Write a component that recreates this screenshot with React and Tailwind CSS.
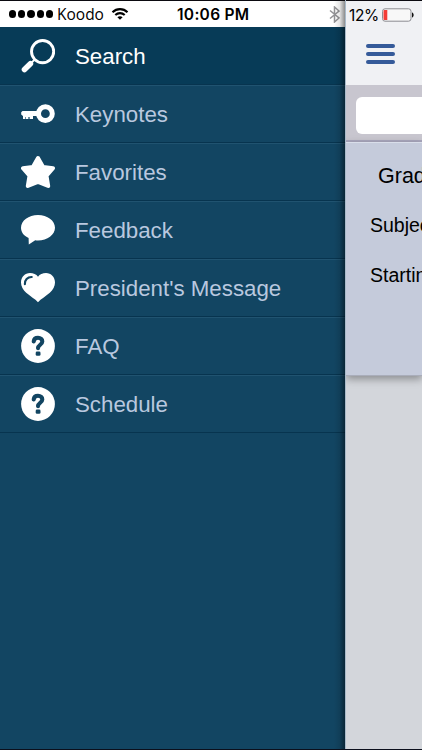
import React, { useState } from 'react';

const SearchIcon = () => (
  <svg className="w-[34px] h-[34px]" viewBox="0 0 34 34" fill="none" stroke="#fff">
    <circle cx="21.6" cy="12.6" r="11.1" strokeWidth="2.9" />
    <path d="M13.6 20.6l-3 3" strokeWidth="2" />
    <path d="M9.4 24.8L3.5 30.5" strokeWidth="5.6" strokeLinecap="round" />
  </svg>
);

const KeyIcon = () => (
  <svg className="w-[34px] h-[34px]" viewBox="0 0 34 34" fill="#fff">
    <circle cx="24.4" cy="16.7" r="6.9" fill="none" stroke="#fff" strokeWidth="5" />
    <path d="M1.5 14H17v5h-5v3H8.6v-2H7.4v2H5v-2H4.400v2H2v-3L.2 17.5v-2.2z" />
  </svg>
);

const StarIcon = () => (
  <svg className="w-[34px] h-[34px]" viewBox="0 0 34 34" fill="#fff" stroke="#fff" strokeWidth="4" strokeLinejoin="round">
    <path d="M17 3l5.1 8.9L32 13.3l-6.5 7.5L27.2 31 17 26.9 6.8 31l1.7-10.2L2 13.3l9.900-1.400z" />
  </svg>
);

const BubbleIcon = () => (
  <svg className="w-[34px] h-[34px]" viewBox="0 0 34 34" fill="#fff">
    <path d="M17 2C7.6 2 0 7.7 0 14.7c0 4.3 2.7 8 7.6 10.3L7.8 31.4l6.4-4.200c1 .2 1.800.2 2.800.2 9.4 0 17-5.700 17-12.700S26.400 2 17 2z" />
  </svg>
);

const HeartIcon = () => (
  <svg className="w-[34px] h-[34px]" viewBox="0 0 34 34">
    <path
      d="M17 31.2C14 28 9.5 25.5 5.2 21.8 2 18.7 0 15.5 0 11.5 0 6 4 2 9 2c3.4 0 6.3 1.3 8 3.7C18.7 3.3 21.6 2 25 2c5 0 9 4 9 9.5 0 4-2 7.2-5.2 10.3C24.5 25.5 20 28 17 31.2z"
      fill="#fff"
    />
    <path d="M3.9 13.2c-.4-4.2 2.7-7.3 6.8-7.2" fill="none" stroke="#124562" strokeWidth="2.2" strokeLinecap="round" />
  </svg>
);

const QuestionIcon = () => (
  <svg className="w-[34px] h-[34px]" viewBox="0 0 34 34" fill="none">
    <circle cx="17" cy="17" r="16.9" fill="#fff" />
    <path
      d="M12.7 12.500c.3-2.400 1.900-3.700 4.300-3.700 2.600 0 4.300 1.500 4.300 3.700 0 3.200-4.200 3.300-4.300 6.600"
      stroke="#124562"
      strokeWidth="4.1"
      strokeLinecap="round"
    />
    <rect x="14.7" y="22.6" width="4.8" height="4.200" rx="1.300" fill="#124562" />
  </svg>
);

const menuItems = [
  { label: 'Search', icon: SearchIcon },
  { label: 'Keynotes', icon: KeyIcon },
  { label: 'Favorites', icon: StarIcon },
  { label: 'Feedback', icon: BubbleIcon },
  { label: "President's Message", icon: HeartIcon },
  { label: 'FAQ', icon: QuestionIcon },
  { label: 'Schedule', icon: QuestionIcon },
];

const StatusBar = () => (
  <div className="h-[27px] shrink-0 bg-white border-t border-[#0b0a10] flex items-center text-black font-['Inter']">
    <div className="flex gap-[2px] ml-[9px] w-[48px]">
      {[1, 2, 3, 4, 5].map((dot) => (
        <span key={dot} className="w-[7.2px] h-[7.2px] rounded-full bg-black" />
      ))}
    </div>
    <span className="mt-0.5 w-[54px] text-[15.5px] leading-none font-['Open_Sans'] whitespace-nowrap">Koodo</span>
    <svg className="w-[18px] h-[14px]" viewBox="0 0 18 14" fill="none" stroke="#000" strokeWidth="2.1">
      <path d="M1.5 5.3c4.2-4.2 10.8-4.2 15 0" />
      <path d="M4.3 8.1c2.7-2.6 6.7-2.6 9.4 0" />
      <path d="M9 12.8L6.4 10.2c1.5-1.4 3.7-1.4 5.2 0z" fill="#000" stroke="none" />
    </svg>
    <span className="ml-[48px] mt-0.5 w-[74px] text-[15.5px] leading-none font-semibold whitespace-nowrap tracking-[0.3px]">10:06 PM</span>
    <svg className="ml-[78px] w-[11px] h-[17px]" viewBox="0 0 11 17" fill="none" stroke="#929295" strokeWidth="1.5">
      <path d="M1 4.500l9 7.500-4.500 4V1L10 5l-9 7.500" />
    </svg>
  </div>
);

const Menu = ({ active, onSelect }) => (
  <nav className="flex flex-col">
    {menuItems.map((item) => {
      const Icon = item.icon;
      const isActive = item.label === active;
      return (
        <button
          key={item.label}
          onClick={() => onSelect(item.label)}
          className={`h-[58px] flex items-center pl-[21px] text-left border-t border-b border-b-[#07344f] ${
            isActive ? 'bg-[#073b57] border-t-[#073b57] text-white' : 'bg-[#124562] border-t-[#205370] text-[#b9c8df]'
          }`}
        >
          <Icon />
          <span className="ml-5 mt-0.5 text-[22.3px] leading-none whitespace-nowrap">{item.label}</span>
        </button>
      );
    })}
  </nav>
);

const Page = () => (
  <div className="flex-1 min-w-0 relative z-10 flex flex-col overflow-hidden bg-[#d3d6db] border-l border-[#a9bac9] text-black">
    <div className="h-[85px] shrink-0 bg-[#f0f1f4] border-t border-[#0b0a10]">
      <div className="h-[26px] mt-px flex items-center">
        <span className="ml-[3px] mt-0.5 w-[33px] text-[15.5px] leading-none whitespace-nowrap font-['Inter'] tracking-[-0.4px]">12%</span>
        <svg className="w-[33px] h-[14px]" viewBox="0 0 33 14">
          <rect x=".5" y=".8" width="28.5" height="12.4" rx="2.5" fill="#f8f8f8" stroke="#8c8c91" />
          <path d="M2.5 2h2.800v10H2.500a1 1 0 0 1-1-1V3a1 1 0 0 1 1-1z" fill="#f33b36" />
          <path d="M30 4.500c2.200.4 2.200 4.600 0 5z" fill="#111" />
        </svg>
      </div>
      <button className="mt-[16px] ml-[20px] flex flex-col gap-1">
        <span className="w-[29px] h-1 rounded-full bg-[#355a99]" />
        <span className="w-[29px] h-1 rounded-full bg-[#355a99]" />
        <span className="w-[29px] h-1 rounded-full bg-[#355a99]" />
      </button>
    </div>
    <div className="h-[57px] shrink-0 bg-[#c8c6cf] border-b-2 border-[#aaa8be] pt-3 pl-[10px]">
      <div className="h-[37px] bg-white rounded-l-[6px]" />
    </div>
    <div className="h-[234px] shrink-0 bg-[#c5cbdb] border-t border-t-[#d9deea] border-b border-b-[#a9adba] shadow-[0_3px_8px_rgba(0,0,0,0.35)] whitespace-nowrap">
      <p className="mt-[20px] ml-[32px] text-[21.5px] leading-[26px]">Grade</p>
      <p className="mt-6 ml-6 text-[19.5px] leading-[25px]">Subject</p>
      <p className="mt-[25px] ml-6 text-[19.5px] leading-[25px]">Starting</p>
    </div>
  </div>
);

const App = () => {
  const [active, setActive] = useState('Search');

  return (
    <div className="w-[422px] h-[750px] overflow-hidden flex flex-col bg-[#0b0f1c] font-['Liberation_Sans',Arial,sans-serif]">
      <div className="h-[749px] flex">
        <div className="relative w-[345px] shrink-0 flex flex-col bg-[#124562]">
          <StatusBar />
          <Menu active={active} onSelect={setActive} />
          {/* Shadow cast by the page on the drawer */}
          <div className="absolute right-0 top-px bottom-0 w-[11px] bg-linear-to-r from-transparent via-black/10 to-black/45" />
        </div>
        <Page />
      </div>
    </div>
  );
};

export default App;
